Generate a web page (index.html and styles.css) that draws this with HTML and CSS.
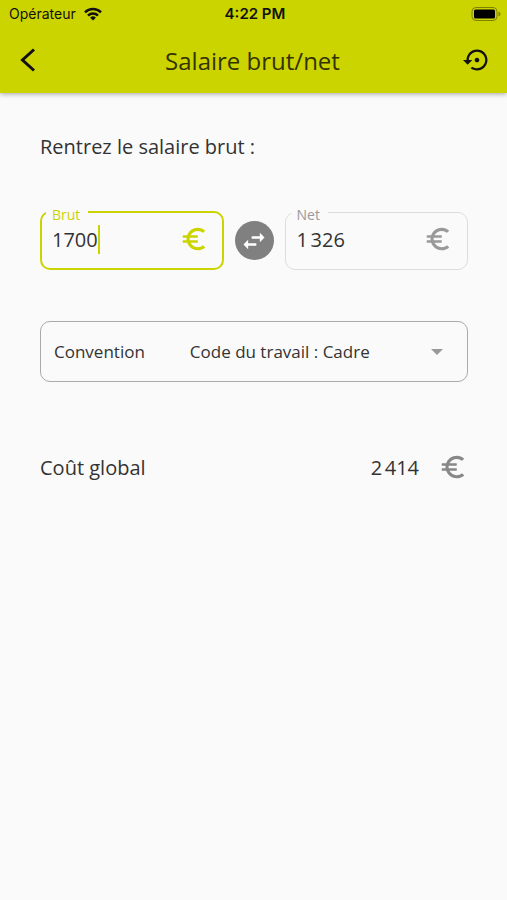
FILE: index.html
```html
<!DOCTYPE html>
<html lang="fr">
<head>
<meta charset="utf-8">
<meta name="viewport" content="width=device-width, initial-scale=1">
<title>Salaire brut/net</title>
<link rel="stylesheet" href="styles.css">
</head>
<body>
<svg class="sprite" aria-hidden="true">
  <symbol id="euro" viewBox="0 0 24 24"><path d="M15 18.5c-2.51 0-4.68-1.42-5.76-3.5H15v-2H8.58c-.05-.33-.08-.66-.08-1s.03-.67.08-1H15V9H9.24C10.320 6.920 12.500 5.500 15 5.500c1.610 0 3.090.59 4.230 1.570L21 5.300C19.410 3.870 17.300 3 15 3c-3.920 0-7.240 2.510-8.480 6H3v2h3.060c-.04.330-.06.660-.06 1s.02.670.06 1H3v2h3.520c1.240 3.490 4.560 6 8.480 6 2.310 0 4.410-.87 6-2.300l-1.780-1.770c-1.130.98-2.600 1.570-4.220 1.570z"/></symbol>
</svg>
<header class="header">
  <div class="status">
    <div class="carrier">
      <span>Opérateur</span>
      <svg class="wifi" viewBox="0 0 18 14" aria-hidden="true"><g fill="none" stroke="currentColor" stroke-width="2.500"><path d="M1 5.300a11.300 11.300 0 0 1 16 0"/><path d="M4 8.600a7 7 0 0 1 10 0"/></g><path d="M9 13.600 6.100 10.800a4.100 4.100 0 0 1 5.800 0z" fill="currentColor"/></svg>
    </div>
    <span class="time">4:22 PM</span>
    <svg class="battery" viewBox="0 0 30 14" aria-hidden="true"><rect x="1" y="0.500" width="25" height="13" rx="4" fill="none" stroke="#7c8100"/><rect x="3" y="2.500" width="21" height="9" rx="1.500"/><path d="M27.500 4.500v5q2-.8 2-2.500t-2-2.500z" fill="#7c8100"/></svg>
  </div>
  <div class="bar">
    <button class="icon-button" type="button" aria-label="Retour"><svg viewBox="0 0 28 28"><path d="M20 3.500 8.500 14 20 24.500" fill="none" stroke="currentColor" stroke-width="3"/></svg></button>
    <h1 class="title">Salaire brut/net</h1>
    <button class="icon-button" type="button" aria-label="Réinitialiser"><svg viewBox="0 0 24 24"><path d="M14 12c0-1.100-.9-2-2-2s-2 .9-2 2 .9 2 2 2 2-.9 2-2zm-2-9c-4.970 0-9 4.030-9 9H0l4 4 4-4H5c0-3.870 3.130-7 7-7s7 3.130 7 7-3.130 7-7 7c-1.510 0-2.910-.49-4.060-1.300l-1.420 1.440C8.040 20.300 9.940 21 12 21c4.970 0 9-4.030 9-9s-4.030-9-9-9z" fill="currentColor"/></svg></button>
  </div>
</header>
<main class="content">
  <h2 class="prompt">Rentrez le salaire brut :</h2>
  <div class="amounts">
    <fieldset class="field field-active">
      <legend><label for="brut">Brut</label></legend>
      <div class="field-row">
        <input id="brut" class="amount" type="text" inputmode="numeric" size="4" value="1700">
        <span class="caret"></span>
        <svg class="euro"><use href="#euro"/></svg>
      </div>
    </fieldset>
    <button class="swap" type="button" aria-label="Inverser"><svg viewBox="0 0 24 24"><path d="M6.990 11 3 15l3.990 4v-3H14v-2H6.990v-3zM21 9l-3.990-4v3H10v2h7.010v3L21 9z" fill="currentColor"/></svg></button>
    <fieldset class="field">
      <legend><label for="net">Net</label></legend>
      <div class="field-row">
        <input id="net" class="amount" type="text" inputmode="numeric" size="5" value="1&#8239;326">
        <svg class="euro"><use href="#euro"/></svg>
      </div>
    </fieldset>
  </div>
  <div class="convention">
    <label for="convention">Convention</label>
    <select id="convention"><option>Code du travail : Cadre</option></select>
    <svg class="arrow" viewBox="0 0 12 6" aria-hidden="true"><path d="M0 0h12L6 6z" fill="currentColor"/></svg>
  </div>
  <div class="total">
    <span class="total-label">Coût global</span>
    <output class="total-value">2&#8239;414</output>
    <svg class="euro"><use href="#euro"/></svg>
  </div>
</main>
</body>
</html>
```
FILE: styles.css
```css
* { box-sizing: border-box; }

body {
  margin: 0;
  min-height: 100vh;
  background: #fafafa;
  color: #333;
  font-family: "Open Sans", "Noto Sans", sans-serif;
  font-size: 20px;
}

button, input, select {
  margin: 0;
  padding: 0;
  border: 0;
  background: none;
  color: inherit;
  font: inherit;
}

button svg { display: block; width: 28px; height: 28px; }

.sprite { display: none; }

.header {
  background: #ccd400;
  color: #111;
  box-shadow: 0 1px 5px rgba(0, 0, 0, 0.35);
}

.status {
  display: grid;
  grid-template-columns: 1fr auto 1fr;
  align-items: center;
  height: 27px;
  padding: 0 6px 0 9px;
  font-family: "Liberation Sans", sans-serif;
  font-family: Inter, sans-serif;
  font-size: 14px;
}

.carrier { display: flex; align-items: center; gap: 8px; }
.wifi { width: 18px; height: 14px; }
.time { font-size: 15px; font-weight: 600; }
.battery { width: 30px; height: 14px; justify-self: end; }

.bar {
  display: flex;
  align-items: center;
  justify-content: space-between;
  height: 66px;
  padding: 0 16px 0 14px;
}

.title { margin: 0; font-size: 24px; font-weight: 400; color: #333300; }

.content { padding: 39px 39px 0 40px; }

.prompt { margin: 0; font-size: 20px; line-height: 30px; font-weight: 400; }

.amounts { display: flex; align-items: center; gap: 11px; margin-top: 41px; }

.field {
  flex: 1;
  min-width: 0;
  height: 67px;
  margin: 0;
  padding: 0 14px 0 11px;
  border: 1px solid #ddd;
  border-radius: 10px;
  color: #999;
}

.field-active { border: 2px solid #ccd400; padding: 0 13px 0 10px; color: #ccd400; }

.field legend {
  margin-left: -6px;
  padding: 6px 8px 0 6px;
  font-size: 14px;
  line-height: 12px;
}

.field-row { display: flex; align-items: center; height: 36px; }
.amount { min-width: 0; color: #333; outline: 0; field-sizing: content; }
.caret { width: 2px; height: 29px; background: #ccd400; }
.euro { width: 30px; height: 30px; margin-left: auto; fill: currentColor; }

.swap {
  display: grid;
  place-items: center;
  width: 39px;
  height: 39px;
  margin-top: 8px;
  border-radius: 50%;
  background: #808080;
  color: #fff;
}

.convention {
  display: flex;
  align-items: center;
  height: 61px;
  margin-top: 51px;
  padding: 0 24px 0 13px;
  border: 1px solid #aaa;
  border-radius: 10px;
  font-size: 17px;
}

.convention select { flex: 1; margin-left: 45px; appearance: none; }
.arrow { width: 12px; height: 6px; color: #999; }

.total { display: flex; align-items: center; margin-top: 70px; }
.total-label { flex: 1; }
.total .euro { margin-left: 19px; color: #888; }
```
